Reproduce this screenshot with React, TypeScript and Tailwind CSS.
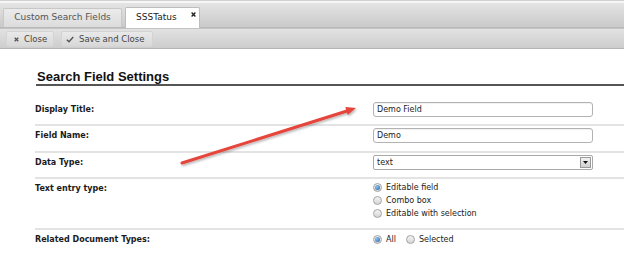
import React from "react";

function Radio({ checked }: { checked?: boolean }) {
  return (
    <span className="relative inline-flex h-[9px] w-[9px] shrink-0 items-center justify-center rounded-full border border-[#a3a3a3] bg-gradient-to-b from-[#f4f4f4] to-[#d6d6d6]">
      {checked && (
        <span className="h-[5px] w-[5px] rounded-full bg-[radial-gradient(circle_at_35%_35%,#8cc4f0,#1e63a8)]" />
      )}
    </span>
  );
}

function Row({
  label,
  children,
  pb = "pb-[7px]",
}: {
  label: string;
  children: React.ReactNode;
  pb?: string;
}) {
  return (
    <div className={`grid grid-cols-[338px_1fr] pt-[2px] ${pb} border-b-2 border-[#e3e3e3]`}>
      <div className="text-[8px] font-bold leading-[15px] text-[#1b1b1b]">{label}</div>
      <div>{children}</div>
    </div>
  );
}

function TextBox({ value }: { value: string }) {
  return (
    <div className="flex h-[15px] w-[220px] items-center rounded-[3px] border border-[#b2b2b2] bg-white pl-[3px] text-[8px] text-[#222] shadow-[inset_0_1px_1px_rgba(0,0,0,0.06)]">
      {value}
    </div>
  );
}

export default function App() {
  return (
    <div className="relative h-[275px] w-[624px] overflow-hidden bg-white font-['DejaVu_Sans',sans-serif]">
      {/* top edge */}
      <div className="h-[1px] bg-[#d2d2d2]" />
      <div className="h-[2px] bg-[#f6f6f6]" />

      {/* tab strip */}
      <div className="flex h-[25px] items-end gap-[3px] border-b border-[#b9b9b9] bg-gradient-to-b from-[#e4e4e4] to-[#cacaca] pl-[3px]">
        <div className="flex h-[19px] w-[119px] items-center justify-center rounded-t-[2px] border border-b-0 border-[#c8c8c8] bg-gradient-to-b from-[#ebebeb] to-[#dcdcdc] text-[9px] text-[#555]">
          Custom Search Fields
        </div>
        <div className="relative -mb-px flex h-[21px] w-[75px] items-center rounded-t-[2px] border border-b-0 border-[#bdbdbd] bg-white pl-[10px] text-[9px] text-[#222]">
          SSSTatus
          <svg className="absolute right-[3px] top-[4px]" width="5" height="5" viewBox="0 0 5 5">
            <path d="M0.6 0.6 L4.4 4.4 M4.4 0.6 L0.6 4.4" stroke="#222" strokeWidth="1.4" />
          </svg>
        </div>
      </div>

      {/* toolbar */}
      <div className="flex h-[21px] items-start gap-[7px] border-y border-t-[#c4c4c4] border-b-[#b4b4b4] bg-gradient-to-b from-[#e2e2e2] to-[#cdcdcd] pl-[6px] pt-[2px]">
        <button className="flex h-[16px] w-[48px] items-center rounded-[2px] border border-[#d4d4d4] bg-gradient-to-b from-[#e9e9e9] to-[#d8d8d8] pl-[7px] text-[8.5px] text-[#444]">
          <svg width="5" height="5" viewBox="0 0 5 5" className="mr-[5px]">
            <path d="M0.7 0.7 L4.3 4.3 M4.3 0.7 L0.7 4.3" stroke="#555" strokeWidth="1.3" />
          </svg>
          Close
        </button>
        <button className="flex h-[16px] w-[92px] items-center rounded-[2px] border border-[#d4d4d4] bg-gradient-to-b from-[#e9e9e9] to-[#d8d8d8] pl-[4px] text-[8.5px] text-[#444]">
          <svg width="8" height="7" viewBox="0 0 8 7" className="mr-[5px]">
            <path d="M0.8 3.8 L3 5.8 L7.2 1" stroke="#555" strokeWidth="1.4" fill="none" />
          </svg>
          Save and Close
        </button>
      </div>

      {/* form */}
      <div className="ml-[35px]">
        <div className="ml-[1px] mt-[20px] border-b-2 border-[#555] pl-[1px] font-['Liberation_Sans',sans-serif] text-[13px] font-bold leading-[15px] text-[#111]">
          Search Field Settings
        </div>

        <div className="mt-[14px]">
          <Row label="Display Title:">
            <TextBox value="Demo Field" />
          </Row>
          <Row label="Field Name:" pb="pb-[8px]">
            <TextBox value="Demo" />
          </Row>
          <Row label="Data Type:">
            <div className="flex h-[15px] w-[220px] items-center justify-between rounded-[2px] border border-[#a8a8a8] bg-white pl-[3px] pr-[1px] text-[8px] text-[#222]">
              text
              <span className="flex h-[11px] w-[11px] items-center justify-center border border-[#9a9a9a] bg-gradient-to-b from-[#f2f2f2] to-[#cfcfcf]">
                <svg width="5" height="3" viewBox="0 0 5 3">
                  <path d="M0 0 L5 0 L2.5 3 Z" fill="#111" />
                </svg>
              </span>
            </div>
          </Row>
          <Row label="Text entry type:" pb="pb-[8px]">
            <div className="flex flex-col text-[8px] text-[#222]">
              {[
                ["Editable field", true],
                ["Combo box", false],
                ["Editable with selection", false],
              ].map(([t, c]) => (
                <label key={t as string} className="flex h-[13px] items-center gap-[4px]">
                  <Radio checked={c as boolean} />
                  {t as string}
                </label>
              ))}
            </div>
          </Row>
          <div className="grid grid-cols-[338px_1fr] pt-[2px]">
            <div className="text-[8px] font-bold leading-[15px] text-[#1b1b1b]">Related Document Types:</div>
            <div className="flex h-[15px] items-center text-[8px] text-[#222]">
              <label className="flex items-center gap-[4px]">
                <Radio checked />
                All
              </label>
              <label className="ml-[10px] flex items-center gap-[4px]">
                <Radio />
                Selected
              </label>
            </div>
          </div>
        </div>
      </div>

      {/* red annotation arrow */}
      <svg className="pointer-events-none absolute inset-0" width="624" height="275" viewBox="0 0 624 275">
        <defs>
          <filter id="sh" x="-10%" y="-10%" width="120%" height="130%">
            <feDropShadow dx="1" dy="1.5" stdDeviation="1" floodColor="#000" floodOpacity="0.3" />
          </filter>
        </defs>
        <g filter="url(#sh)">
          <line x1="182" y1="163" x2="347" y2="111" stroke="#e5443b" strokeWidth="3" strokeLinecap="round" />
          <polygon points="356,108 347.7,115 345.3,107" fill="#e5443b" />
        </g>
      </svg>
    </div>
  );
}
